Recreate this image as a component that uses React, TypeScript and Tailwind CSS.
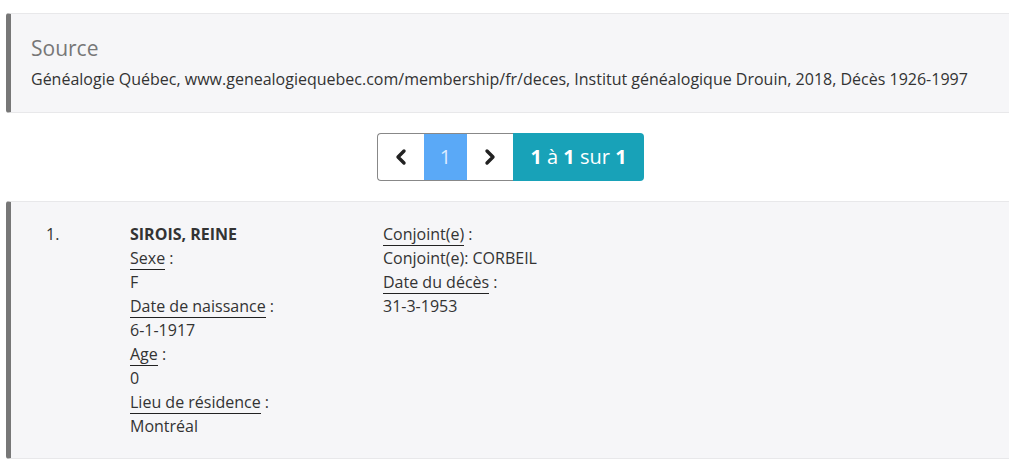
import { ChevronLeft, ChevronRight } from "lucide-react";

const LEFT: [string, string][] = [
  ["Sexe", "F"],
  ["Date de naissance", "6-1-1917"],
  ["Age", "0"],
  ["Lieu de résidence", "Montréal"],
];

const RIGHT: [string, string][] = [
  ["Conjoint(e)", "Conjoint(e): CORBEIL"],
  ["Date du décès", "31-3-1953"],
];

function Field({ label, value }: { label: string; value: string }) {
  return (
    <>
      <div>
        <span className="border-b border-[#222]">{label}</span> :
      </div>
      <div>{value}</div>
    </>
  );
}

export default function App() {
  return (
    <div
      className="min-h-[470px] overflow-hidden bg-white pl-[6px] pt-[13px] text-[16px] leading-[24px] text-[#333]"
      style={{ fontFamily: '"Open Sans", "Liberation Sans", sans-serif' }}
    >
      <div className="w-[1009px]">
        <div className="rounded-l-[3px] border-y border-l-[5px] border-y-[#e8e8ea] border-l-[#777] bg-[#f6f6f8] px-5 pt-[20px] pb-[21px]">
          <h3 className="text-[21px] leading-[29px] text-[#777]">Source</h3>
          <p className="mt-[4px]">
            Généalogie Québec, www.genealogiequebec.com/membership/fr/deces, Institut généalogique Drouin, 2018, Décès
            1926-1997
          </p>
        </div>

        <div className="mt-[20px] flex justify-center">
          <div className="flex h-[48px] text-[20px]">
            <button
              type="button"
              className="flex w-[47px] items-center justify-center rounded-l-[4px] border border-r-0 border-[#888] bg-white text-[#222]"
            >
              <ChevronLeft className="size-6" strokeWidth={3.4} />
            </button>
            <span className="flex w-[43px] items-center justify-center border-y border-[#888] bg-[#5aa9f7] text-[#dcecff]">
              1
            </span>
            <button
              type="button"
              className="flex w-[46px] items-center justify-center border-y border-[#888] bg-white text-[#222]"
            >
              <ChevronRight className="size-6" strokeWidth={3.4} />
            </button>
            <span className="flex w-[131px] items-center justify-center rounded-r-[4px] bg-[#18a2b8] text-white">
              <b className="font-bold">1</b>&nbsp;à&nbsp;<b className="font-bold">1</b>&nbsp;sur&nbsp;
              <b className="font-bold">1</b>
            </span>
          </div>
        </div>

        <div className="mt-[20px] flex rounded-l-[3px] border-y border-l-[5px] border-y-[#e8e8ea] border-l-[#777] bg-[#f6f6f8] pt-[20px] pb-[20px]">
          <div className="w-[119px] pl-[35px]">1.</div>
          <div className="w-[253px]">
            <div className="font-bold">SIROIS, REINE</div>
            {LEFT.map(([l, v]) => (
              <Field key={l} label={l} value={v} />
            ))}
          </div>
          <div>
            {RIGHT.map(([l, v]) => (
              <Field key={l} label={l} value={v} />
            ))}
          </div>
        </div>
      </div>
    </div>
  );
}
